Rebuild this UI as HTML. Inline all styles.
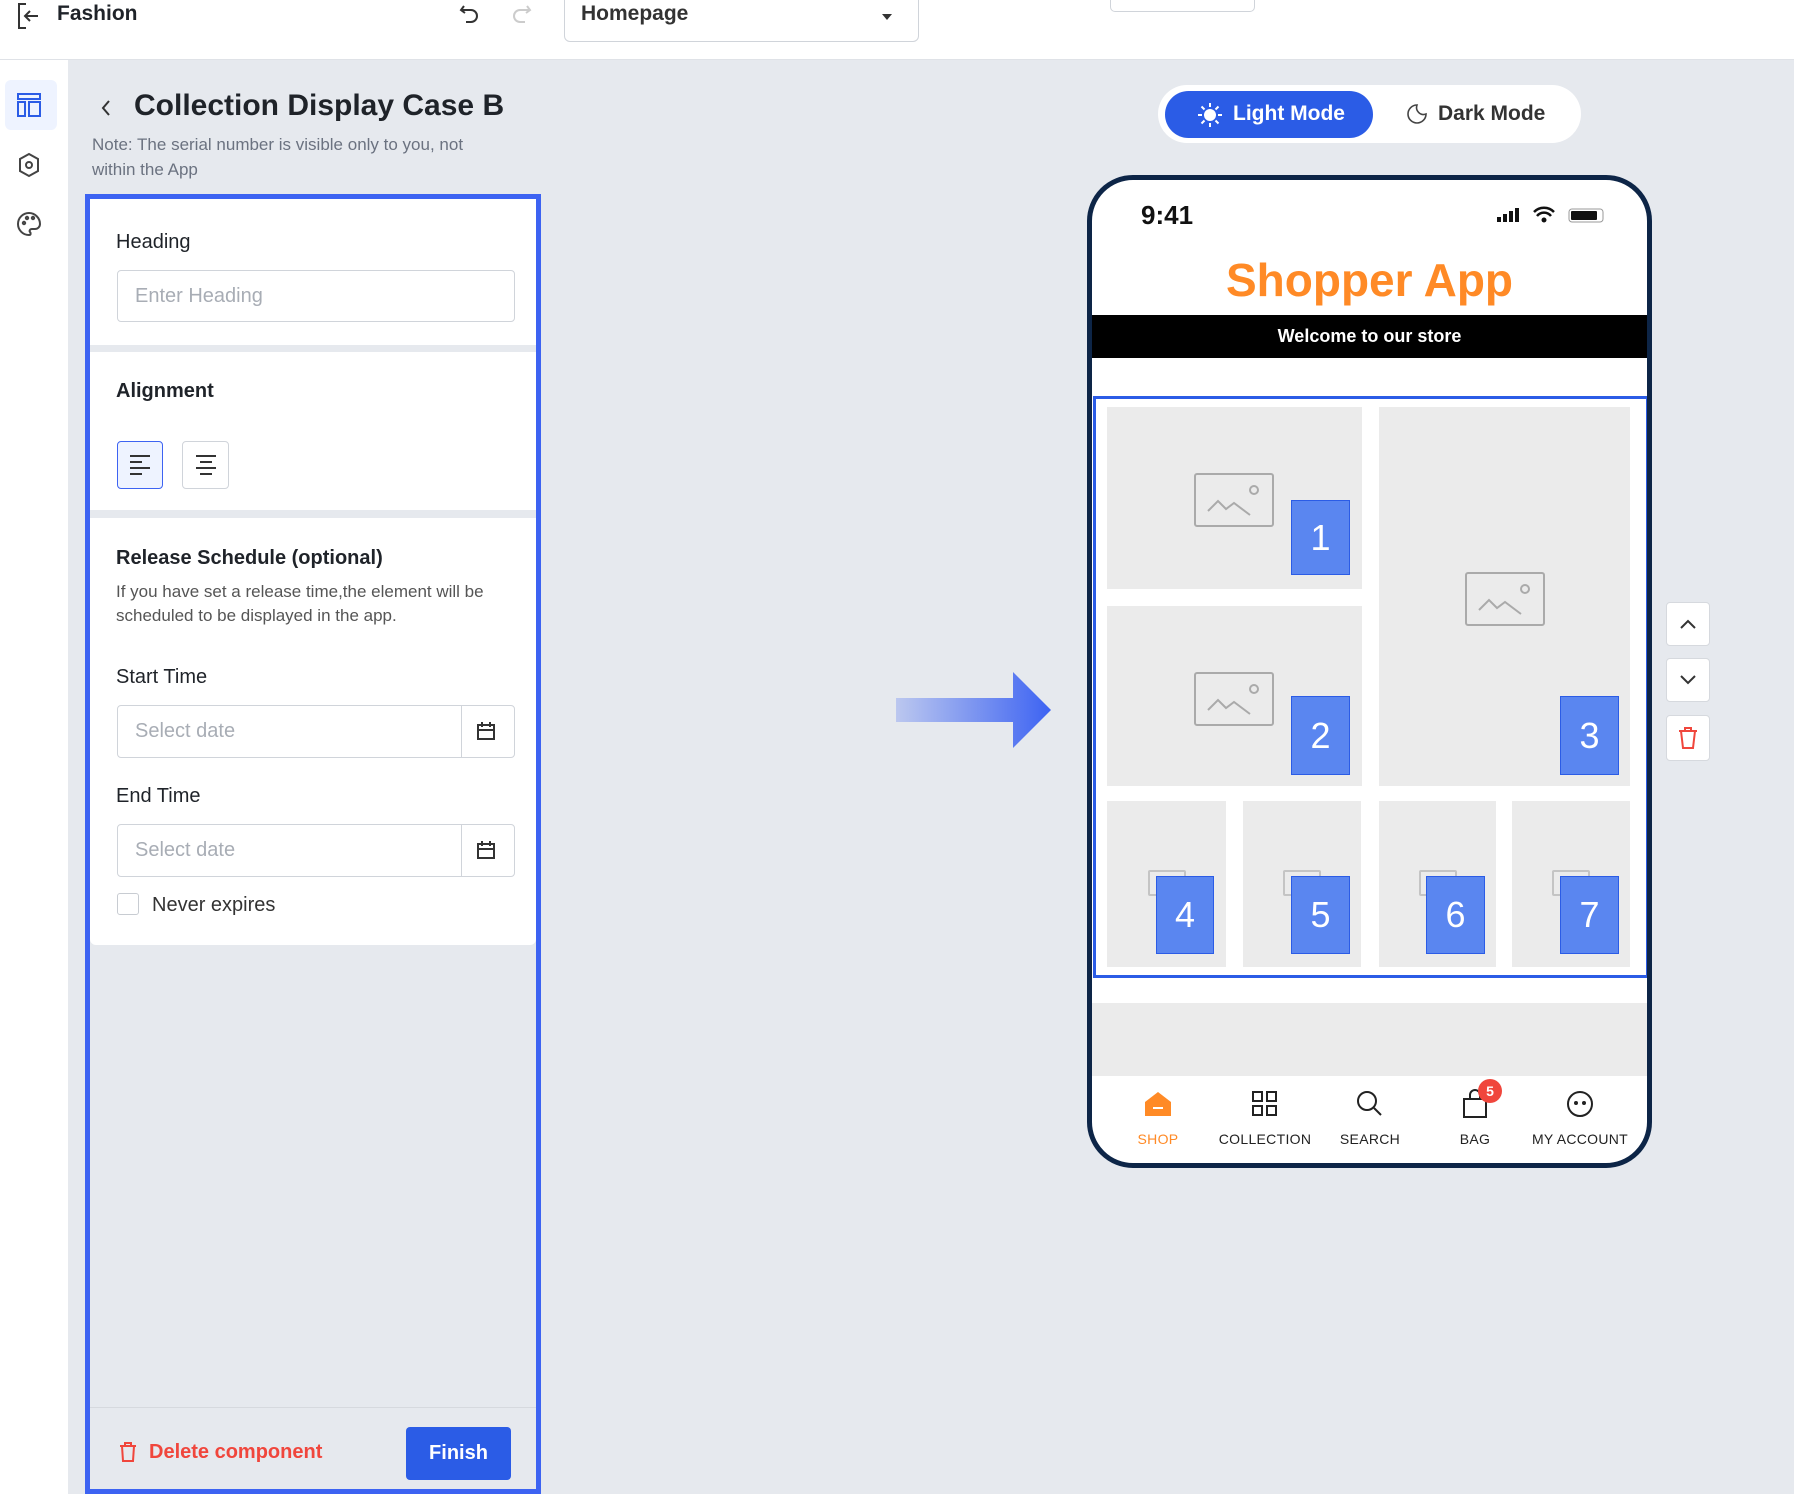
<!DOCTYPE html>
<html><head><meta charset="utf-8"><style>
*{box-sizing:border-box;margin:0;padding:0}
body{width:1794px;height:1494px;overflow:hidden;background:#e6e9ee;font-family:"Liberation Sans",sans-serif;color:#1f2329;position:relative}
.a{position:absolute}
.top{left:0;top:0;width:1794px;height:60px;background:#fff;border-bottom:1px solid #dfe2e7}
.side{left:0;top:60px;width:68px;height:1434px;background:#fff}
.lbl{font-size:20px;color:#1f2329}
.inp{background:#fff;border:1px solid #d0d4da;border-radius:4px;color:#a8adb5;font-size:20px;padding-left:17px;display:flex;align-items:center}
.tile{background:#ebebeb}
.num{background:#5a86f0;border:1px solid #2b5ce6;color:#fff;font-size:36px;display:flex;align-items:center;justify-content:center}
.tab{font-size:14px;color:#222;text-align:center;letter-spacing:.3px}
.sbtn{background:#fff;border:1px solid #d6d9de;border-radius:4px;display:flex;align-items:center;justify-content:center}
.sm{position:absolute;width:38px;height:26px;border:2px solid #c4c4c4;border-radius:2px}
</style></head><body>
<div class="a top"></div>
<svg class="a" style="left:16px;top:2px" width="26" height="28" viewBox="0 0 26 28" fill="none" stroke="#333" stroke-width="2"><path d="M10 2H3v24h7"/><path d="M22 14H9M14 9l-5 5 5 5"/></svg>
<div class="a" style="left:57px;top:2px;font-size:21px;font-weight:bold">Fashion</div>
<svg class="a" style="left:458px;top:3px" width="24" height="24" viewBox="0 0 24 24" fill="none" stroke="#333" stroke-width="2"><path d="M6 3L3 7l4 3"/><path d="M3 7h10a6 6 0 010 12H8"/></svg>
<svg class="a" style="left:509px;top:3px" width="24" height="24" viewBox="0 0 24 24" fill="none" stroke="#ccc" stroke-width="2"><path d="M18 3l3 4-4 3"/><path d="M21 7H11a6 6 0 000 12h5"/></svg>
<div class="a" style="left:564px;top:-6px;width:355px;height:48px;border:1px solid #d0d4da;border-radius:6px;background:#fff"></div>
<div class="a" style="left:581px;top:2px;font-size:21px;font-weight:bold;color:#333">Homepage</div>
<div class="a" style="left:882px;top:14px;border-left:5px solid transparent;border-right:5px solid transparent;border-top:6px solid #333"></div>
<div class="a" style="left:1110px;top:-6px;width:145px;height:18px;border:1px solid #d0d4da;border-radius:5px;background:#fff"></div>

<div class="a side"></div>
<div class="a" style="left:5px;top:80px;width:52px;height:50px;background:#eef3ff;border-radius:6px"></div>
<svg class="a" style="left:16px;top:92px" width="26" height="26" viewBox="0 0 26 26" fill="none" stroke="#2b5ce6" stroke-width="2"><rect x="2" y="2" width="22" height="5"/><rect x="2" y="10" width="7" height="14"/><rect x="13" y="10" width="11" height="14"/></svg>
<svg class="a" style="left:17px;top:152px" width="24" height="26" viewBox="0 0 24 26" fill="none" stroke="#444" stroke-width="2"><path d="M12 2l9 5v12l-9 5-9-5V7z"/><circle cx="12" cy="13" r="3"/></svg>
<svg class="a" style="left:16px;top:211px" width="26" height="26" viewBox="0 0 26 26" fill="none" stroke="#444" stroke-width="2"><path d="M13 2a11 11 0 100 22c2 0 2-2 1-3s0-3 2-3h3a5 5 0 005-5C24 7 19 2 13 2z"/><circle cx="8" cy="12" r="1.2"/><circle cx="11" cy="7" r="1.2"/><circle cx="17" cy="7" r="1.2"/></svg>

<svg class="a" style="left:98px;top:97px" width="16" height="22" viewBox="0 0 16 22" fill="none" stroke="#333" stroke-width="2"><path d="M11 4l-6 7 6 7"/></svg>
<div class="a" style="left:134px;top:89px;font-size:30px;font-weight:bold">Collection Display Case B</div>
<div class="a" style="left:92px;top:132px;font-size:17px;color:#6b7280;line-height:25px;width:390px">Note: The serial number is visible only to you, not within the App</div>

<div class="a" style="left:85px;top:194px;width:456px;height:1300px;border:5px solid #3d63f2;background:#e6e9ee"></div>
<div class="a" style="left:90px;top:199px;width:446px;height:146px;background:#fff"></div>
<div class="a lbl" style="left:116px;top:231px">Heading</div>
<div class="a inp" style="left:117px;top:270px;width:398px;height:52px">Enter Heading</div>
<div class="a" style="left:90px;top:352px;width:446px;height:158px;background:#fff"></div>
<div class="a lbl" style="left:116px;top:380px;font-weight:bold">Alignment</div>
<div class="a" style="left:117px;top:441px;width:46px;height:48px;border:1px solid #3d63f2;border-radius:4px;background:#eef3ff"></div>
<svg class="a" style="left:128px;top:454px" width="24" height="22" viewBox="0 0 24 22" stroke="#333" stroke-width="2"><path d="M2 2h20M2 8h12M2 14h20M2 20h12"/></svg>
<div class="a" style="left:182px;top:441px;width:47px;height:48px;border:1px solid #d0d4da;border-radius:4px;background:#fff"></div>
<svg class="a" style="left:194px;top:454px" width="24" height="22" viewBox="0 0 24 22" stroke="#333" stroke-width="2"><path d="M2 2h20M6 8h12M2 14h20M6 20h12"/></svg>
<div class="a" style="left:90px;top:518px;width:446px;height:427px;background:#fff;border-radius:0 0 6px 6px"></div>
<div class="a lbl" style="left:116px;top:547px;font-weight:bold">Release Schedule (optional)</div>
<div class="a" style="left:116px;top:580px;font-size:17px;color:#555;line-height:24px;width:395px">If you have set a release time,the element will be scheduled to be displayed in the app.</div>
<div class="a lbl" style="left:116px;top:666px">Start Time</div>
<div class="a inp" style="left:117px;top:705px;width:398px;height:53px">Select date</div>
<div class="a" style="left:461px;top:706px;width:1px;height:51px;background:#d0d4da"></div>
<svg class="a" style="left:476px;top:721px" width="20" height="20" viewBox="0 0 20 20" fill="none" stroke="#333" stroke-width="2"><rect x="2" y="4" width="16" height="14"/><path d="M2 9h16M6 1v5M14 1v5"/></svg>
<div class="a lbl" style="left:116px;top:785px">End Time</div>
<div class="a inp" style="left:117px;top:824px;width:398px;height:53px">Select date</div>
<div class="a" style="left:461px;top:825px;width:1px;height:51px;background:#d0d4da"></div>
<svg class="a" style="left:476px;top:840px" width="20" height="20" viewBox="0 0 20 20" fill="none" stroke="#333" stroke-width="2"><rect x="2" y="4" width="16" height="14"/><path d="M2 9h16M6 1v5M14 1v5"/></svg>
<div class="a" style="left:117px;top:893px;width:22px;height:22px;border:1px solid #c8ccd2;border-radius:3px;background:#fff"></div>
<div class="a lbl" style="left:152px;top:894px;color:#333">Never expires</div>
<div class="a" style="left:90px;top:1407px;width:446px;height:1px;background:#d6d9de"></div>
<svg class="a" style="left:118px;top:1441px" width="20" height="22" viewBox="0 0 20 22" fill="none" stroke="#f0463c" stroke-width="2"><path d="M2 5h16M7 5V2h6v3M4 5l1 15h10l1-15"/></svg>
<div class="a" style="left:149px;top:1441px;font-size:20px;font-weight:bold;color:#f0463c">Delete component</div>
<div class="a" style="left:406px;top:1427px;width:105px;height:53px;background:#2b5ce6;border-radius:4px;color:#fff;font-size:20px;font-weight:bold;display:flex;align-items:center;justify-content:center">Finish</div>

<div class="a" style="left:1158px;top:85px;width:423px;height:58px;background:#fff;border-radius:29px"></div>
<div class="a" style="left:1165px;top:91px;width:208px;height:47px;background:#2b5ce6;border-radius:24px"></div>
<svg class="a" style="left:1196px;top:101px" width="28" height="28" viewBox="0 0 28 28" fill="#fff" stroke="#fff" stroke-width="2"><circle cx="14" cy="14" r="5"/><path d="M14 2v4M14 22v4M2 14h4M22 14h4M5.5 5.5l3 3M19.5 19.5l3 3M5.5 22.5l3-3M19.5 8.5l3-3"/></svg>
<div class="a" style="left:1233px;top:102px;font-size:21px;color:#fff;font-weight:bold">Light Mode</div>
<svg class="a" style="left:1406px;top:103px" width="22" height="22" viewBox="0 0 22 22" fill="none" stroke="#444" stroke-width="1.6"><path d="M11 2a9 9 0 109 9 7 7 0 01-9-9z"/></svg>
<div class="a" style="left:1438px;top:102px;font-size:21px;color:#333;font-weight:bold">Dark Mode</div>

<svg class="a" style="left:896px;top:672px" width="156" height="76" viewBox="0 0 156 76"><defs><linearGradient id="g" x1="0" x2="1"><stop offset="0" stop-color="#3d63f2" stop-opacity=".25"/><stop offset="1" stop-color="#3d63f2"/></linearGradient></defs><path d="M0 26h117V0l38 38-38 38V50H0z" fill="url(#g)"/></svg>

<div class="a" style="left:1087px;top:175px;width:565px;height:993px;border:5px solid #0d2547;border-radius:46px;background:#fff;overflow:hidden">
 <div class="a" style="left:49px;top:20px;font-size:26px;font-weight:bold;color:#111">9:41</div>
 <svg class="a" style="left:405px;top:26px" width="110" height="18" viewBox="0 0 110 18"><rect x="0" y="11" width="4" height="5" fill="#111"/><rect x="6" y="8" width="4" height="8" fill="#111"/><rect x="12" y="5" width="4" height="11" fill="#111"/><rect x="18" y="2" width="4" height="14" fill="#111"/><path d="M37 6a14 14 0 0120 0M40 10a9 9 0 0114 0" stroke="#111" stroke-width="2.5" fill="none"/><circle cx="47" cy="14" r="2.5" fill="#111"/><rect x="72" y="3" width="34" height="13" rx="3" fill="none" stroke="#999"/><rect x="74" y="5" width="26" height="9" rx="1" fill="#111"/></svg>
 <div class="a" style="left:0;width:555px;top:73px;text-align:center;font-size:46px;font-weight:bold;color:#ff8a26">Shopper App</div>
 <div class="a" style="left:0;top:135px;width:555px;height:43px;background:#000;color:#fff;font-size:18px;font-weight:bold;display:flex;align-items:center;justify-content:center">Welcome to our store</div>
 <div class="a" style="left:1px;top:216px;width:556px;height:582px;border:3px solid #2b5ce6"></div>
 <div class="a tile" style="left:15px;top:227px;width:255px;height:182px"></div>
 <div class="a tile" style="left:15px;top:426px;width:255px;height:180px"></div>
 <div class="a tile" style="left:287px;top:227px;width:251px;height:379px"></div>
 <div class="a tile" style="left:15px;top:621px;width:119px;height:166px"></div>
 <div class="a tile" style="left:151px;top:621px;width:118px;height:166px"></div>
 <div class="a tile" style="left:287px;top:621px;width:117px;height:166px"></div>
 <div class="a tile" style="left:420px;top:621px;width:118px;height:166px"></div>
 <div class="sm" style="left:56px;top:690px"></div>
 <div class="sm" style="left:191px;top:690px"></div>
 <div class="sm" style="left:327px;top:690px"></div>
 <div class="sm" style="left:460px;top:690px"></div>
 <svg class="a" style="left:102px;top:293px" width="80" height="54" viewBox="0 0 80 54" fill="none" stroke="#aaa" stroke-width="2"><rect x="1" y="1" width="78" height="52" rx="2"/><path d="M14 38l10-10 8 8 8-6 16 12"/><circle cx="60" cy="17" r="4"/></svg>
 <svg class="a" style="left:102px;top:492px" width="80" height="54" viewBox="0 0 80 54" fill="none" stroke="#aaa" stroke-width="2"><rect x="1" y="1" width="78" height="52" rx="2"/><path d="M14 38l10-10 8 8 8-6 16 12"/><circle cx="60" cy="17" r="4"/></svg>
 <svg class="a" style="left:373px;top:392px" width="80" height="54" viewBox="0 0 80 54" fill="none" stroke="#aaa" stroke-width="2"><rect x="1" y="1" width="78" height="52" rx="2"/><path d="M14 38l10-10 8 8 8-6 16 12"/><circle cx="60" cy="17" r="4"/></svg>
 <div class="a num" style="left:199px;top:320px;width:59px;height:75px">1</div>
 <div class="a num" style="left:199px;top:516px;width:59px;height:79px">2</div>
 <div class="a num" style="left:468px;top:516px;width:59px;height:79px">3</div>
 <div class="a num" style="left:64px;top:696px;width:58px;height:78px">4</div>
 <div class="a num" style="left:199px;top:696px;width:59px;height:78px">5</div>
 <div class="a num" style="left:334px;top:696px;width:59px;height:78px">6</div>
 <div class="a num" style="left:468px;top:696px;width:59px;height:78px">7</div>
 <div class="a" style="left:0;top:823px;width:555px;height:73px;background:#ebebeb"></div>
 <svg class="a" style="left:51px;top:910px" width="30" height="28" viewBox="0 0 30 28"><path d="M15 2L28 12v14H2V12z" fill="#ff8a26"/><path d="M10 18h10" stroke="#fff" stroke-width="2"/></svg>
 <svg class="a" style="left:159px;top:910px" width="28" height="28" viewBox="0 0 28 28" fill="none" stroke="#222" stroke-width="2"><rect x="2" y="2" width="9" height="9"/><rect x="16" y="2" width="9" height="9"/><rect x="2" y="16" width="9" height="9"/><rect x="16" y="16" width="9" height="9"/></svg>
 <svg class="a" style="left:263px;top:909px" width="30" height="30" viewBox="0 0 30 30" fill="none" stroke="#222" stroke-width="2"><circle cx="12" cy="12" r="9"/><path d="M19 19l7 7"/></svg>
 <svg class="a" style="left:368px;top:909px" width="30" height="30" viewBox="0 0 30 30" fill="none" stroke="#222" stroke-width="2"><path d="M4 10h22v18H4z"/><path d="M10 10V6a5 5 0 0110 0v4"/></svg>
 <div class="a" style="left:386px;top:899px;width:24px;height:24px;border-radius:12px;background:#f0463c;color:#fff;font-size:14px;font-weight:bold;display:flex;align-items:center;justify-content:center">5</div>
 <svg class="a" style="left:473px;top:909px" width="30" height="30" viewBox="0 0 30 30" fill="none" stroke="#222" stroke-width="2"><circle cx="15" cy="15" r="12"/><circle cx="11" cy="14" r="1" fill="#222"/><circle cx="19" cy="14" r="1" fill="#222"/></svg>
 <div class="a tab" style="left:26px;top:951px;width:80px;color:#ff8a26">SHOP</div>
 <div class="a tab" style="left:113px;top:951px;width:120px">COLLECTION</div>
 <div class="a tab" style="left:228px;top:951px;width:100px">SEARCH</div>
 <div class="a tab" style="left:333px;top:951px;width:100px">BAG</div>
 <div class="a tab" style="left:428px;top:951px;width:120px">MY ACCOUNT</div>
</div>

<div class="a sbtn" style="left:1666px;top:602px;width:44px;height:44px"><svg width="18" height="12" viewBox="0 0 18 12" fill="none" stroke="#333" stroke-width="2"><path d="M2 10l7-7 7 7"/></svg></div>
<div class="a sbtn" style="left:1666px;top:658px;width:44px;height:44px"><svg width="18" height="12" viewBox="0 0 18 12" fill="none" stroke="#333" stroke-width="2"><path d="M2 2l7 7 7-7"/></svg></div>
<div class="a sbtn" style="left:1666px;top:715px;width:44px;height:46px"><svg width="22" height="24" viewBox="0 0 22 24" fill="none" stroke="#f0463c" stroke-width="2"><path d="M2 5h18M8 5V2h6v3M4 5l2 17h10l2-17"/></svg></div>
</body></html>
